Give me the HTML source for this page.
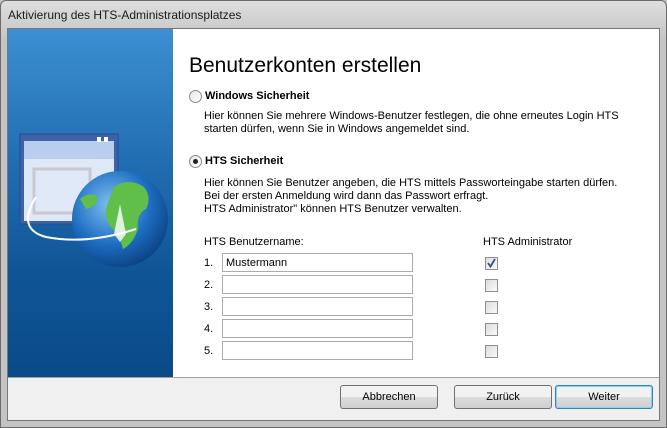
<!DOCTYPE html>
<html><head><style>
*{margin:0;padding:0;box-sizing:border-box}
body{width:667px;height:428px;background:#c5c5c5;font-family:"Liberation Sans",sans-serif;font-size:11px;color:#000;position:relative;overflow:hidden}
.frame{position:absolute;left:0;top:0;width:667px;height:428px;border:1px solid #6b6b6b;background:linear-gradient(#dedede,#c4c4c4 40px,#c4c4c4);border-radius:6px 6px 0 0}
.title{position:absolute;left:8px;top:8px;font-size:12px;color:#1a1a1a}
.client{position:absolute;left:7px;top:28px;width:653px;height:393px;border:1px solid #777;background:#fff}
.blue{position:absolute;left:0;top:0;width:165px;height:348px;background:linear-gradient(180deg,#3b8fd2 0%,#2470b5 35%,#0f5596 70%,#0a4b89 100%)}
.foot{position:absolute;left:0;top:348px;width:651px;height:43px;background:#f0f0f0;border-top:1px solid #a0a0a0}
.a{position:absolute;white-space:nowrap}
.inp{position:absolute;left:214px;width:191px;height:19px;border:1px solid #ababab;background:#fff;padding:3px 3px}
.cb{position:absolute;left:477px;width:13px;height:13px;border:1px solid #8e8f8f;background:linear-gradient(135deg,#dcdcdc,#fafafa)}
.btn{position:absolute;top:356px;height:24px;border:1px solid #707070;border-radius:3px;background:linear-gradient(#f2f2f2 50%,#dddddd 50%,#cfcfcf);text-align:center;line-height:22px}
.rad{position:absolute;width:13px;height:13px;border:1px solid #8a8a8a;border-radius:50%;background:linear-gradient(135deg,#e6e6e6,#fff)}
</style></head><body>
<div class="frame"></div>
<div class="title">Aktivierung des HTS-Administrationsplatzes</div>
<div class="client">
 <div class="blue">
  <svg width="165" height="348" style="position:absolute;left:0;top:0">
   <defs><radialGradient id="g" cx="0.4" cy="0.35" r="0.7"><stop offset="0" stop-color="#7fc0f0"/><stop offset="0.6" stop-color="#1d6dc0"/><stop offset="1" stop-color="#0b3f80"/></radialGradient></defs>
   <rect x="12" y="105" width="98" height="90" fill="#3c63a8" stroke="#274b8e"/>
   <rect x="16" y="112" width="90" height="80" fill="#dfe8f7"/>
   <rect x="16" y="112" width="90" height="18" fill="#b9cdee"/>
   <rect x="89" y="108" width="4" height="5" fill="#fff"/><rect x="96" y="108" width="4" height="5" fill="#fff"/>
   <rect x="26" y="140" width="56" height="44" fill="none" stroke="#c8c8d0" stroke-width="3"/>
   <circle cx="112" cy="190" r="48" fill="url(#g)"/>
   <path d="M106 158 q15 -10 30 0 q8 10 2 22 q-10 5 -8 20 q-5 15 -15 20 q-4 -15 -12 -22 q-8 -10 -4 -22 z" fill="#5fbf4a"/>
   <path d="M72 170 q10 -8 18 -2 q-2 10 -12 12 z" fill="#5fbf4a"/>
   <path d="M28 168 q-20 32 10 40 q40 8 90 -8" fill="none" stroke="#fff" stroke-width="2"/>
   <path d="M106 205 l6 -30 l6 30 l-6 8 z" fill="#fff" opacity=".8"/>
  </svg>
 </div>
 <div class="a" style="left:181px;top:25px;font-size:21px">Benutzerkonten erstellen</div>
 <div class="rad" style="left:181px;top:61px"></div>
 <div class="a" style="left:197px;top:61px;font-weight:bold">Windows Sicherheit</div>
 <div class="a" style="left:196px;top:81px;line-height:13px">Hier können Sie mehrere Windows-Benutzer festlegen, die ohne erneutes Login HTS<br>starten dürfen, wenn Sie in Windows angemeldet sind.</div>
 <div class="rad" style="left:181px;top:126px"><div style="position:absolute;left:3px;top:3px;width:5px;height:5px;border-radius:50%;background:#222"></div></div>
 <div class="a" style="left:197px;top:126px;font-weight:bold">HTS Sicherheit</div>
 <div class="a" style="left:196px;top:148px;line-height:13px">Hier können Sie Benutzer angeben, die HTS mittels Passworteingabe starten dürfen.<br>Bei der ersten Anmeldung wird dann das Passwort erfragt.<br>HTS Administrator" können HTS Benutzer verwalten.</div>
 <div class="a" style="left:196px;top:207px">HTS Benutzername:</div>
 <div class="a" style="left:475px;top:207px">HTS Administrator</div>
 <div class="a" style="left:196px;top:228px">1.</div><div class="inp" style="top:224px">Mustermann</div>
 <div class="a" style="left:196px;top:250px">2.</div><div class="inp" style="top:246px"></div>
 <div class="a" style="left:196px;top:272px">3.</div><div class="inp" style="top:268px"></div>
 <div class="a" style="left:196px;top:294px">4.</div><div class="inp" style="top:290px"></div>
 <div class="a" style="left:196px;top:316px">5.</div><div class="inp" style="top:312px"></div>
 <div class="cb" style="top:228px"><svg width="11" height="11" style="position:absolute;left:0;top:0"><path d="M2 5 L4.5 8.5 L9 1" fill="none" stroke="#3a4f8c" stroke-width="1.8"/></svg></div>
 <div class="cb" style="top:250px"></div>
 <div class="cb" style="top:272px"></div>
 <div class="cb" style="top:294px"></div>
 <div class="cb" style="top:316px"></div>
 <div class="foot"></div>
 <div class="btn" style="left:332px;width:98px">Abbrechen</div>
 <div class="btn" style="left:446px;width:98px">Zurück</div>
 <div class="btn" style="left:547px;width:98px;border-color:#3c7fb1;box-shadow:inset 0 0 0 1px #7fd4f8">Weiter</div>
</div>
</body></html>
